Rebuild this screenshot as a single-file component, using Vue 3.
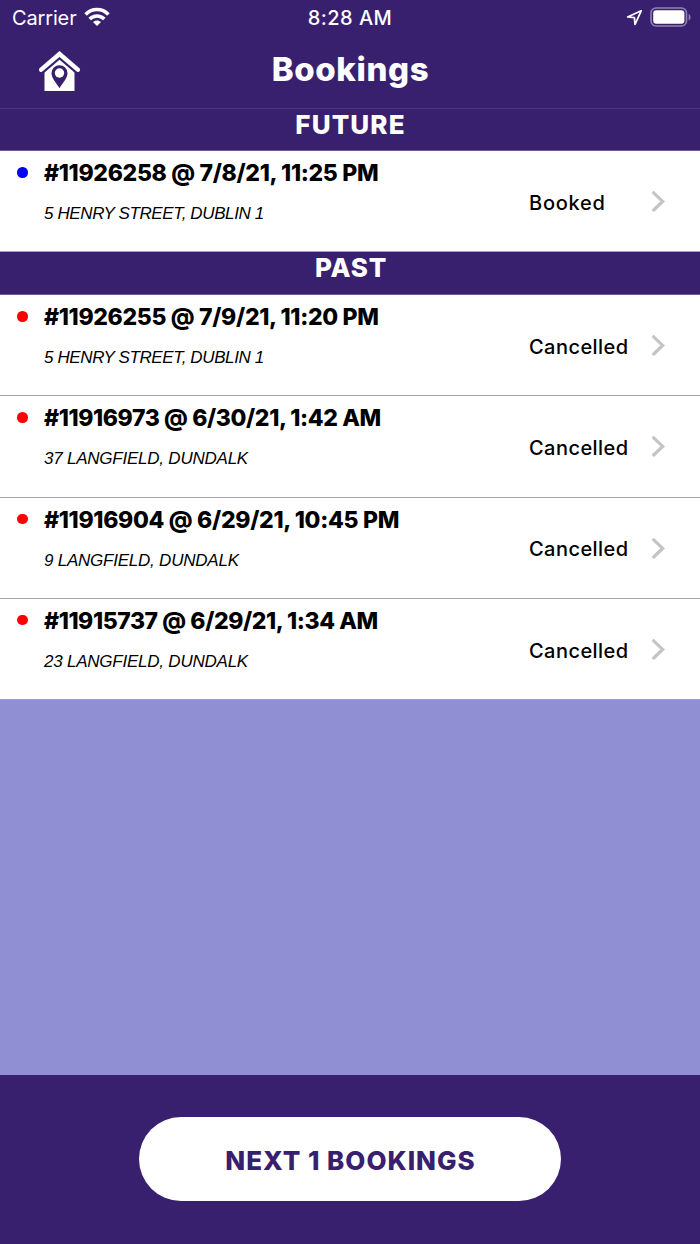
<template>
  <div class="screen">
    <header class="top">
      <div class="status-bar">
        <div class="status-left">
          <span class="carrier">Carrier</span>
          <svg class="wifi" width="26" height="20" viewBox="0 0 26 20">
            <g fill="none" stroke="#fff" stroke-width="3.6">
              <path d="M1.6 7.5C8 .9 18 .9 24.4 7.5" />
              <path d="M5.7 12C9.8 7.9 16.2 7.9 20.3 12" />
            </g>
            <path fill="#fff" d="M13 19l-4-4c2.2-2.1 5.8-2.1 8 0z" />
          </svg>
        </div>
        <span class="clock">8:28 AM</span>
        <div class="status-right">
          <svg width="17" height="17" viewBox="0 0 17 17">
            <path d="M15.2 1.8L1.6 8l6.8.6.6 6.8z" fill="none" stroke="#fff" stroke-width="1.7" stroke-linejoin="round" />
          </svg>
          <svg width="42" height="20" viewBox="0 0 42 20">
            <rect x="1" y="1" width="35.5" height="18" rx="5" fill="none" stroke="#8f82b4" stroke-width="1.6" />
            <rect x="3.2" y="3.2" width="31.2" height="13.6" rx="3" fill="#fff" />
            <path d="M38.6 7v6.4c2.6-1 2.6-5.4 0-6.4z" fill="#8f82b4" />
          </svg>
        </div>
      </div>
      <div class="nav">
        <svg class="home" width="42" height="41" viewBox="0 0 42 41">
          <path d="M5.5 19.5L20.5 6.5l15 13V40h-30z" fill="#fff" />
          <path d="M2 19.3L20.5 3.5 39 19.3" fill="none" stroke="#39206f" stroke-width="8" />
          <path d="M2.2 18.7L20.5 3 38.8 18.7" fill="none" stroke="#fff" stroke-width="4.4" stroke-linecap="round" stroke-linejoin="miter" />
          <path d="M20.5 37.2c-3-5.2-8-10-8-15a8 8 0 0 1 16 0c0 5-5 9.8-8 15z" fill="#39206f" />
          <circle cx="20.5" cy="22" r="4.7" fill="#fff" />
        </svg>
        <h1>Bookings</h1>
      </div>
    </header>

    <main class="list">
      <section v-for="group in groups" :key="group.title">
        <h2 :class="group.title.toLowerCase()">{{ group.title }}</h2>
        <div v-for="item in group.items" :key="item.id" class="row">
          <span class="dot" :class="{ upcoming: item.status === 'Booked' }"></span>
          <div class="info">
            <div class="title" :style="{ letterSpacing: item.tracking + 'px' }">#{{ item.id }} @ {{ item.date }}</div>
            <div class="address" :style="{ letterSpacing: item.addressTracking + 'px' }">{{ item.address }}</div>
          </div>
          <span class="state" :class="item.status.toLowerCase()">{{ item.status }}</span>
          <svg class="chevron" width="14" height="22" viewBox="0 0 14 22">
            <path d="M2.7 2.8l9 8.6-9 8.6" fill="none" stroke="#c4c4c7" stroke-width="3.2" stroke-linecap="round" />
          </svg>
        </div>
      </section>
    </main>

    <footer class="bottom">
      <button class="next">NEXT 1 BOOKINGS</button>
    </footer>
  </div>
</template>

<script setup>
const groups = [
  {
    title: 'FUTURE',
    items: [
      { id: '11926258', date: '7/8/21, 11:25 PM', address: '5 HENRY STREET, DUBLIN 1', status: 'Booked', tracking: -0.32, addressTracking: -0.38 }
    ]
  },
  {
    title: 'PAST',
    items: [
      { id: '11926255', date: '7/9/21, 11:20 PM', address: '5 HENRY STREET, DUBLIN 1', status: 'Cancelled', tracking: -0.33, addressTracking: -0.38 },
      { id: '11916973', date: '6/30/21, 1:42 AM', address: '37 LANGFIELD, DUNDALK', status: 'Cancelled', tracking: -0.39, addressTracking: -0.23 },
      { id: '11916904', date: '6/29/21, 10:45 PM', address: '9 LANGFIELD, DUNDALK', status: 'Cancelled', tracking: -0.31, addressTracking: -0.23 },
      { id: '11915737', date: '6/29/21, 1:34 AM', address: '23 LANGFIELD, DUNDALK', status: 'Cancelled', tracking: -0.42, addressTracking: -0.23 }
    ]
  }
]
</script>

<style>
body {
  margin: 0;
}
</style>

<style scoped>
.screen {
  display: flex;
  flex-direction: column;
  width: 700px;
  height: 1244px;
  background: #918fd3;
  font-family: Inter, sans-serif;
  overflow: hidden;
}

.top {
  box-sizing: border-box;
  height: 109px;
  background: #39206f;
  border-bottom: 1px solid #4c357d;
  color: #fff;
}

.status-bar {
  display: grid;
  grid-template-columns: 1fr auto 1fr;
  align-items: center;
  height: 36px;
  padding: 0 8px 0 12px;
}

.status-left,
.status-right {
  display: flex;
  align-items: center;
}

.carrier {
  font-size: 20px;
  letter-spacing: -0.15px;
}

.wifi {
  margin: -3px 0 0 7px;
}

.clock {
  margin-right: 4px;
  font-size: 20px;
  font-weight: 500;
  letter-spacing: 0.45px;
}

.status-right {
  justify-content: flex-end;
  gap: 7px;
  margin-top: -2px;
}

.nav {
  display: grid;
  grid-template-columns: 100px 1fr 100px;
  align-items: center;
  height: 70px;
}

.home {
  margin-left: 39px;
}

h1 {
  margin: -4px 0 0;
  padding-left: 1px;
  font-size: 33px;
  font-weight: 800;
  line-height: 40px;
  letter-spacing: 0.6px;
  text-align: center;
}

h2 {
  box-sizing: border-box;
  height: 43px;
  margin: 0;
  padding-left: 1px;
  background: #39206f;
  border-bottom: 1px solid #6d5c91;
  color: #fff;
  font-size: 26px;
  font-weight: 800;
  line-height: 31px;
  letter-spacing: 1.1px;
  text-align: center;
}

h2.future {
  height: 42px;
}

h2.past {
  padding-left: 2px;
  letter-spacing: 0.8px;
}

.row {
  display: flex;
  box-sizing: border-box;
  height: 101.2px;
  padding: 0 35px 0 17px;
  background: #fff;
  border-bottom: 1px solid #a5a5a8;
  color: #000;
}

.dot {
  flex-shrink: 0;
  width: 10.5px;
  height: 10.5px;
  margin-top: 16px;
  border-radius: 50%;
  background: #f00;
}

.dot.upcoming {
  background: #00f;
}

.info {
  flex: 1;
  margin-left: 16.5px;
  white-space: nowrap;
}

.title {
  margin-top: 8px;
  font-size: 23px;
  font-weight: 800;
  line-height: 28px;
}

.address {
  margin-top: 17px;
  font-family: "Liberation Sans", sans-serif;
  font-size: 17px;
  font-style: italic;
  line-height: 20px;
}

.state {
  width: 122px;
  margin-top: 38.8px;
  font-size: 20px;
  font-weight: 500;
  line-height: 26px;
  letter-spacing: 0.45px;
}

.state.booked {
  letter-spacing: 0.75px;
}

.chevron {
  margin-top: 39px;
}

.bottom {
  display: flex;
  justify-content: center;
  align-items: flex-start;
  box-sizing: border-box;
  height: 169px;
  margin-top: auto;
  padding-top: 42px;
  background: #39206f;
}

.next {
  width: 422px;
  height: 84px;
  padding: 2px 0 0 1px;
  border: 0;
  border-radius: 42px;
  background: #fff;
  color: #39206f;
  font-family: Inter, sans-serif;
  font-size: 26px;
  font-weight: 800;
  letter-spacing: 0.97px;
}
</style>
